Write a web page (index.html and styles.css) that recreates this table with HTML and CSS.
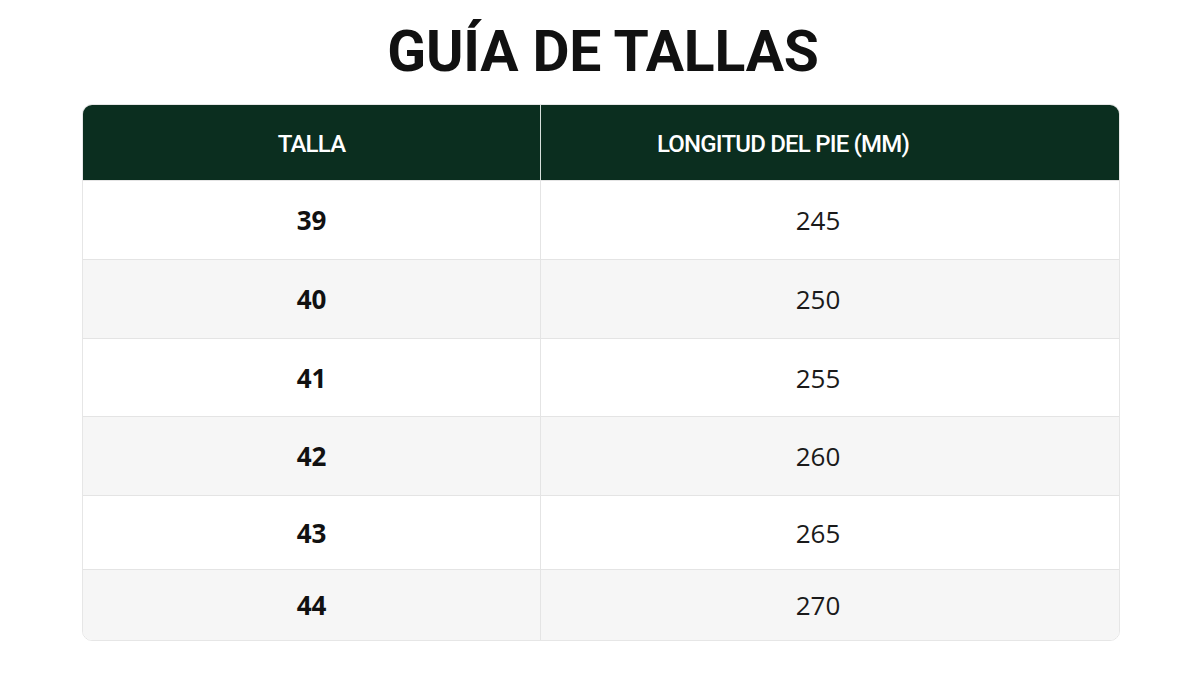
FILE: index.html
```html
<!DOCTYPE html>
<html lang="es">
<head>
<meta charset="utf-8">
<title>Guía de tallas</title>
<link rel="stylesheet" href="styles.css">
</head>
<body>
<main class="page">
  <h1 class="title">GUÍA DE TALLAS</h1>
  <div class="table">
    <div class="row head">
      <div class="cell c1">TALLA</div>
      <div class="cell c2">LONGITUD DEL PIE (MM)</div>
    </div>
    <div class="row"><div class="cell c1 size">39</div><div class="cell c2">245</div></div>
    <div class="row alt"><div class="cell c1 size">40</div><div class="cell c2">250</div></div>
    <div class="row mid"><div class="cell c1 size">41</div><div class="cell c2">255</div></div>
    <div class="row alt"><div class="cell c1 size">42</div><div class="cell c2">260</div></div>
    <div class="row short"><div class="cell c1 size">43</div><div class="cell c2">265</div></div>
    <div class="row alt shorter"><div class="cell c1 size">44</div><div class="cell c2">270</div></div>
  </div>
</main>
</body>
</html>
```

FILE: styles.css
```css
html, body {
  margin: 0;
  padding: 0;
  background: #ffffff;
}
.page {
  width: 1200px;
  height: 675px;
  box-sizing: border-box;
  padding: 20px 80px 0 82px;
  font-family: "Open Sans", "Noto Sans", sans-serif;
}
.title {
  margin: 0;
  height: 84px;
  font-family: Roboto, "Liberation Sans", sans-serif;
  font-weight: 700;
  font-size: 57px;
  line-height: 64px;
  letter-spacing: -0.2px;
  text-align: center;
  color: #111111;
  padding-left: 4px;
}
.table {
  width: 1038px;
  border: 1px solid #e6e6e6;
  border-radius: 10px;
  overflow: hidden;
  box-sizing: border-box;
}
.row {
  display: grid;
  grid-template-columns: 458px 1fr;
  height: 79px;
  border-top: 1px solid #e4e4e4;
  box-sizing: border-box;
  background: #ffffff;
}
.row.alt {
  background: #f6f6f6;
}
.row.mid {
  height: 78px;
}
.row.short {
  height: 74px;
}
.row.shorter {
  height: 71px;
}
.row.head {
  height: 75px;
  border-top: none;
  background: #0b2e1f;
}
.cell {
  display: flex;
  align-items: center;
  justify-content: center;
  font-size: 26px;
  color: #1a1a1a;
}
.c1 {
  border-right: 1px solid #e4e4e4;
}
.c2 {
  padding-right: 24px;
}
.head .cell {
  color: #ffffff;
  font-family: Roboto, "Liberation Sans", sans-serif;
  font-size: 24px;
  font-weight: 500;
  letter-spacing: -0.8px;
}
.head .c1 {
  border-right: 1px solid #d8e0dc;
  padding-top: 2px;
}
.head .c2 {
  padding-right: 94px;
  padding-top: 2px;
}
.size {
  font-weight: 700;
  color: #111111;
}
```
